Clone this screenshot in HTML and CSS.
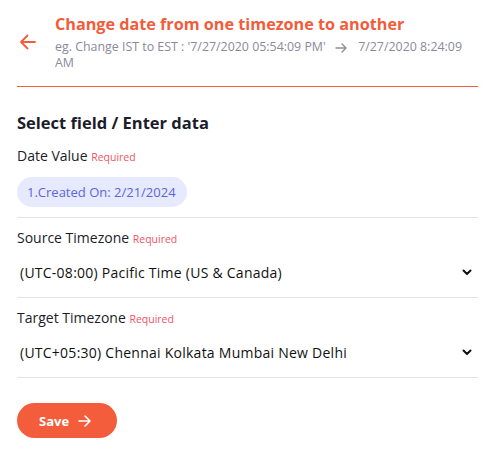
FILE: index.html
```html
<!DOCTYPE html>
<html>
<head>
<meta charset="utf-8">
<link rel="stylesheet" href="styles.css">
</head>
<body>
<div class="page">
  <header class="head">
    <button class="back" aria-label="Back">
      <svg width="18" height="18" viewBox="0 0 18 18"><path d="M16 9H2M8.5 2.5 2 9l6.5 6.5" fill="none" stroke="#f25c3b" stroke-width="1.8" stroke-linecap="round" stroke-linejoin="round"/></svg>
    </button>
    <div class="head-text">
      <h1 class="title">Change date from one timezone to another</h1>
      <p class="sub">eg. Change IST to EST : '7/27/2020 05:54:09 PM' <svg class="sub-arrow" width="12" height="10" viewBox="0 0 12 10"><path d="M1 5h10M7 1l4 4-4 4" fill="none" stroke="#8e8e9e" stroke-width="1.4" stroke-linecap="round" stroke-linejoin="round"/></svg> 7/27/2020 8:24:09 AM</p>
    </div>
  </header>

  <section class="form">
    <h2 class="section-title">Select field / Enter data</h2>

    <div class="field">
      <div class="label">Date Value <span class="req">Required</span></div>
      <div class="chip-row"><span class="chip">1.Created On: 2/21/2024</span></div>
    </div>

    <div class="field field-select">
      <div class="label">Source Timezone <span class="req">Required</span></div>
      <div class="select">
        <span>(UTC-08:00) Pacific Time (US &amp; Canada)</span>
        <svg width="10" height="7" viewBox="0 0 10 7"><path d="M1.5 1.5 5 5l3.5-3.5" fill="none" stroke="#111" stroke-width="2" stroke-linecap="round" stroke-linejoin="round"/></svg>
      </div>
    </div>

    <div class="field field-select">
      <div class="label">Target Timezone <span class="req">Required</span></div>
      <div class="select">
        <span>(UTC+05:30) Chennai Kolkata Mumbai New Delhi</span>
        <svg width="10" height="7" viewBox="0 0 10 7"><path d="M1.5 1.5 5 5l3.5-3.5" fill="none" stroke="#111" stroke-width="2" stroke-linecap="round" stroke-linejoin="round"/></svg>
      </div>
    </div>

    <button class="save">Save
      <svg width="13" height="12" viewBox="0 0 13 12"><path d="M1 6h11M7 1l5 5-5 5" fill="none" stroke="#fff" stroke-width="1.6" stroke-linecap="round" stroke-linejoin="round"/></svg>
    </button>
  </section>
</div>
</body>
</html>
```
FILE: styles.css
```css
* { box-sizing: border-box; }
html, body { margin: 0; padding: 0; background: #fff; }
body {
  font-family: "Open Sans", "Noto Sans", sans-serif;
  color: #1c1c2b;
  width: 486px;
  height: 452px;
  overflow: hidden;
}
.page {
  padding: 0 8px 0 17px;
  height: 452px;
}
.head {
  display: flex;
  align-items: flex-start;
  gap: 18px;
  padding: 14px 0 0 0;
  height: 87px;
  border-bottom: 1px solid #f25c3b;
}
.back {
  border: 0;
  background: none;
  padding: 0;
  margin: 19px 0 0 2px;
  width: 18px;
  height: 18px;
  display: flex;
  cursor: pointer;
}
.head-text { flex: 1; padding-right: 12px; }
.title {
  margin: 0;
  font-size: 16.2px;
  font-weight: 700;
  color: #f25c3b;
  line-height: 20px;
}
.sub {
  margin: 5px 0 0 0;
  font-size: 12.4px;
  line-height: 16px;
  color: #8a8a9a;
}
.sub-arrow { margin: 0 8px 0 6px; vertical-align: middle; }
.form { padding-top: 25px; }
.section-title {
  margin: 0 0 12px 0;
  font-size: 16.5px;
  font-weight: 700;
  color: #1c1c2b;
  line-height: 22px;
}
.field {
  border-bottom: 1px solid #e3e1ea;
  padding-bottom: 10px;
  margin-bottom: 10px;
}
.field-select { padding-bottom: 2px; }
.label {
  font-size: 14px;
  line-height: 20px;
  color: #1c1c2b;
}
.req { font-size: 10.5px; color: #ef5466; }
.chip-row { padding-top: 10px; display: flex; }
.chip {
  display: inline-block;
  background: #e7e9fd;
  color: #5a67dc;
  font-size: 13px;
  line-height: 30px;
  height: 30px;
  padding: 0 11px 0 10px;
  border-radius: 15px;
}
.select {
  display: flex;
  align-items: center;
  justify-content: space-between;
  height: 46px;
  padding: 0 6px 0 3px;
  font-size: 14px;
  letter-spacing: 0.25px;
  color: #111;
}
.save {
  margin-top: 15px;
  display: inline-flex;
  align-items: center;
  gap: 9px;
  height: 35px;
  padding: 0 26px 0 22px;
  border: 0;
  border-radius: 18px;
  background: #f45d3b;
  color: #fff;
  font-family: inherit;
  font-size: 13px;
  font-weight: 700;
  cursor: pointer;
}
```
